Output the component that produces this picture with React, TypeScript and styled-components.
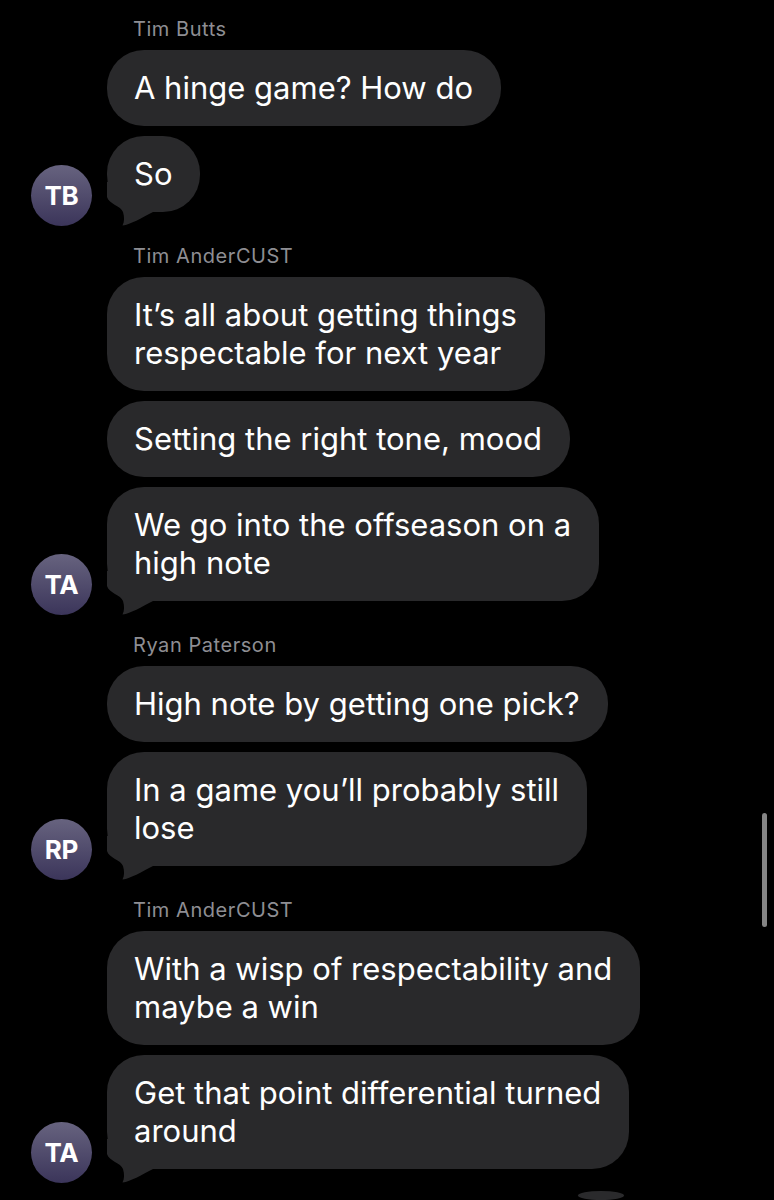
import React from "react";
import styled, { createGlobalStyle } from "styled-components";

const GlobalStyle = createGlobalStyle`
  html, body {
    margin: 0;
    padding: 0;
    background: #000;
  }
  body {
    font-family: Inter, "Noto Sans", "Liberation Sans", sans-serif;
    -webkit-font-smoothing: antialiased;
  }
`;

type Group = {
  name: string;
  initials: string;
  messages: string[][];
};

const groups: Group[] = [
  {
    name: "Tim Butts",
    initials: "TB",
    messages: [["A hinge game? How do"], ["So"]],
  },
  {
    name: "Tim AnderCUST",
    initials: "TA",
    messages: [
      ["It’s all about getting things", "respectable for next year"],
      ["Setting the right tone, mood"],
      ["We go into the offseason on a", "high note"],
    ],
  },
  {
    name: "Ryan Paterson",
    initials: "RP",
    messages: [["High note by getting one pick?"], ["In a game you’ll probably still", "lose"]],
  },
  {
    name: "Tim AnderCUST",
    initials: "TA",
    messages: [
      ["With a wisp of respectability and", "maybe a win"],
      ["Get that point differential turned", "around"],
    ],
  },
];

const Screen = styled.div`
  position: relative;
  width: 774px;
  height: 1200px;
  overflow: hidden;
  background: #000;
  box-sizing: border-box;
  padding: 17px 0 0 31px;
  display: flex;
  flex-direction: column;
  gap: 32px;
`;

const GroupBlock = styled.section`
  display: flex;
  flex-direction: column;
`;

const SenderName = styled.div`
  padding-left: 102px;
  margin-bottom: 9px;
  font-size: 20px;
  line-height: 24px;
  color: #8e8e93;
  letter-spacing: 0.55px;
`;

const Row = styled.div`
  display: flex;
  align-items: flex-end;
  gap: 15px;
`;

const Avatar = styled.div`
  flex: 0 0 auto;
  width: 61px;
  height: 61px;
  border-radius: 50%;
  margin-bottom: -14px;
  background: linear-gradient(180deg, #67637f 0%, #3b355a 100%);
  display: flex;
  align-items: center;
  justify-content: center;
  color: #fff;
  font-weight: 700;
  font-size: 26px;
  letter-spacing: -0.3px;
`;

const Bubbles = styled.div`
  display: flex;
  flex-direction: column;
  align-items: flex-start;
  gap: 10px;
`;

const Bubble = styled.div`
  position: relative;
  background: #29292b;
  border-radius: 37px;
  padding: 19px 28px 19px 27px;
  color: #fff;
  font-size: 31px;
  line-height: 38px;
  letter-spacing: 0px;
`;

const Line = styled.span`
  position: relative;
  z-index: 1;
  display: block;
  white-space: nowrap;
`;

const Tail = styled.svg`
  position: absolute;
  z-index: 0;
  left: 0;
  bottom: -14px;
  width: 46px;
  height: 44px;
`;

const Peek = styled.div`
  margin-top: -10px;
  margin-left: 547px;
  width: 46px;
  height: 46px;
  border-radius: 50%;
  background: #2a2a2c;
`;

const ScrollThumb = styled.div`
  position: absolute;
  right: 7px;
  top: 813px;
  width: 5px;
  height: 114px;
  border-radius: 3px;
  background: #858585;
`;

function BubbleTail() {
  return (
    <Tail viewBox="0 0 46 44" aria-hidden="true">
      <path
        d="M0 0 L0 15 C2 22 14 24 16 30 C17.5 35 17.5 40 15.5 43.5 C24 42.5 34 36 46 30 L46 0 Z"
        fill="#29292b"
      />
    </Tail>
  );
}

export default function App() {
  return (
    <>
      <GlobalStyle />
      <Screen>
        {groups.map((g, gi) => (
          <GroupBlock key={gi}>
            <SenderName>{g.name}</SenderName>
            <Row>
              <Avatar>{g.initials}</Avatar>
              <Bubbles>
                {g.messages.map((lines, mi) => (
                  <Bubble key={mi}>
                    {lines.map((l, li) => (
                      <Line key={li}>{l}</Line>
                    ))}
                    {mi === g.messages.length - 1 && <BubbleTail />}
                  </Bubble>
                ))}
              </Bubbles>
            </Row>
          </GroupBlock>
        ))}
        <Peek />
        <ScrollThumb />
      </Screen>
    </>
  );
}
